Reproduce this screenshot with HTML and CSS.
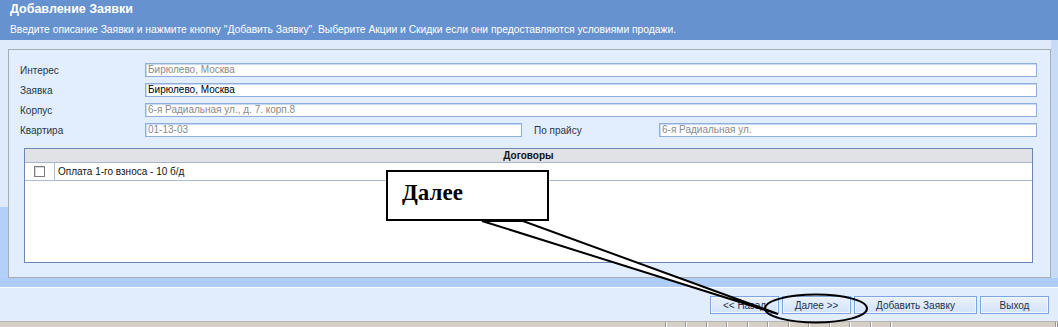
FILE: index.html
```html
<!DOCTYPE html>
<html>
<head>
<meta charset="utf-8">
<link rel="stylesheet" href="styles.css">
</head>
<body>
<div class="page">
  <div class="header">
    <div class="title">Добавление Заявки</div>
    <div class="subtitle">Введите описание Заявки и нажмите кнопку "Добавить Заявку". Выберите Акции и Скидки если они предоставляются условиями продажи.</div>
  </div>
  <div class="main">
    <div class="panel">
      <div class="row">
        <span class="label">Интерес</span>
        <div class="input dis">Бирюлево, Москва</div>
      </div>
      <div class="row">
        <span class="label">Заявка</span>
        <div class="input">Бирюлево, Москва</div>
      </div>
      <div class="row">
        <span class="label">Корпус</span>
        <div class="input dis">6-я Радиальная ул., д. 7. корп.8</div>
      </div>
      <div class="row">
        <span class="label">Квартира</span>
        <div class="input dis half">01-13-03</div>
        <span class="label2">По прайсу</span>
        <div class="input dis">6-я Радиальная ул.</div>
      </div>
      <div class="grid">
        <div class="grid-head">Договоры</div>
        <div class="grid-row">
          <div class="cb-cell"><span class="cb"></span></div>
          <div class="txt-cell">Оплата 1-го взноса - 10 б/д</div>
        </div>
      </div>
    </div>
  </div>
  <div class="band"></div>
  <div class="footer">
    <button class="btn b-back">&lt;&lt; Назад</button>
    <button class="btn b-next">Далее &gt;&gt;</button>
    <button class="btn b-add">Добавить Заявку</button>
    <button class="btn b-exit">Выход</button>
  </div>
  <div class="status">
    <span class="seg s1"></span><span class="seg"></span><span class="seg"></span><span class="seg"></span><span class="seg"></span><span class="seg"></span><span class="seg"></span><span class="seg"></span><span class="seg"></span><span class="seg"></span><span class="seg"></span><span class="seg"></span><span class="seg wide"></span><span class="seg last"></span>
  </div>

  <svg class="overlay" width="1058" height="327" viewBox="0 0 1058 327">
    <polygon points="482,221 523,221 778,314" fill="#fff" stroke="#000" stroke-width="2" stroke-linejoin="miter"/>
    <ellipse cx="816" cy="308.5" rx="51" ry="14" fill="none" stroke="#000" stroke-width="2"/>
  </svg>
  <div class="callout">Далее</div>
</div>
</body>
</html>
```
FILE: styles.css
```css
html, body {
  margin: 0;
  padding: 0;
}
body {
  width: 1058px;
  height: 327px;
  overflow: hidden;
  background: #e1edfd;
  font-family: "Liberation Sans", "DejaVu Sans", sans-serif;
  font-size: 11px;
}
.page {
  position: relative;
  width: 1058px;
  height: 327px;
}
.header {
  background: #6692cf;
  height: 40px;
  box-sizing: border-box;
  padding: 2px 10px 0 10px;
  color: #fff;
}
.title {
  font-weight: bold;
  font-size: 12.5px;
  line-height: 15px;
}
.subtitle {
  margin-top: 6px;
  font-size: 10.3px;
  line-height: 14px;
}
.main {
  background: linear-gradient(to bottom, #dfeafb 167px, #b3d1f8 167px) no-repeat 0 0 / 8px 100%, #dfeafb;
  border-right: 7px solid #c7dbf6;
  padding: 9px 0 0 8px;
  height: 238px;
  box-sizing: border-box;
}
.panel {
  background: #e2eefd;
  border: 1px solid #a7adb6;
  height: 229px;
  box-sizing: border-box;
  padding: 13px 13px 0 11px;
}
.row {
  display: flex;
  align-items: center;
  height: 14px;
  margin-bottom: 6px;
}
.label {
  width: 125px;
  flex: none;
  color: #2a3446;
  font-size: 10px;
}
.label2 {
  width: 125px;
  flex: none;
  margin-left: 12px;
  color: #2a3446;
  font-size: 10px;
}
.input {
  flex: 1;
  height: 14px;
  box-sizing: border-box;
  border: 1px solid #8eafdd;
  box-shadow: inset 1px 1px 0 #c9d9f0;
  background: #fff;
  font-size: 10px;
  line-height: 12px;
  padding-left: 2px;
  color: #000;
  white-space: nowrap;
  overflow: hidden;
}
.input.dis {
  color: #8a8a8a;
}
.input.half {
  flex: none;
  width: 377px;
}
.grid {
  margin: 11px 4px 0 4px;
  height: 115px;
  box-sizing: border-box;
  border: 1px solid #6d87b4;
  background: #fff;
}
.grid-head {
  height: 13px;
  background: #e0e2e6;
  border-bottom: 1px solid #a6b6cc;
  text-align: center;
  font-weight: bold;
  font-size: 10px;
  line-height: 13px;
  color: #111;
}
.grid-row {
  display: flex;
  height: 17px;
  border-bottom: 1px solid #a9bdd8;
}
.cb-cell {
  width: 29px;
  border-right: 1px solid #a9bdd8;
  display: flex;
  align-items: center;
  justify-content: center;
}
.cb {
  width: 9px;
  height: 9px;
  border: 1px solid #7d7d7d;
  background: #fff;
  box-shadow: inset 1px 1px 0 #d8d8d8;
}
.txt-cell {
  padding-left: 3px;
  font-size: 10px;
  line-height: 17px;
  color: #111;
}
.band {
  height: 9px;
  background: #aecdf8;
  border-bottom: 1px solid #fafcff;
}
.footer {
  height: 33px;
  box-sizing: border-box;
  display: flex;
  justify-content: flex-end;
  align-items: flex-start;
  gap: 3px;
  padding: 8px 9px 0 0;
  background: #e1edfd;
}
.btn {
  height: 18px;
  box-sizing: border-box;
  border: 1px solid #7fa5de;
  box-shadow: inset 0 0 0 1px #f2f7ff;
  background: linear-gradient(#e9f1fd, #d3e3f9);
  font-family: "Liberation Sans", "DejaVu Sans", sans-serif;
  font-size: 10px;
  color: #22324e;
  padding: 0;
  margin: 0;
}
.b-back { width: 69px; }
.b-next { width: 69px; }
.b-add { width: 123px; }
.b-exit { width: 69px; }
.status {
  height: 6px;
  background: #d4d0c8;
  border-top: 1px solid #b8b4ac;
  display: flex;
  padding-left: 0;
}
.seg {
  width: 19px;
  border-left: 1px solid #fff;
  border-right: 1px solid #9a968e;
}
.seg.s1 { width: 685px; border-left: none; }
.seg.wide { width: 168px; }
.seg.last { flex: 1; }
.overlay {
  position: absolute;
  left: 0;
  top: 0;
  pointer-events: none;
}
.callout {
  position: absolute;
  left: 386px;
  top: 170px;
  width: 163px;
  height: 51px;
  box-sizing: border-box;
  border: 2px solid #000;
  background: #fff;
  font-family: "Liberation Serif", serif;
  font-weight: bold;
  font-size: 23px;
  padding: 9px 0 0 14px;
  line-height: 24px;
}
```
